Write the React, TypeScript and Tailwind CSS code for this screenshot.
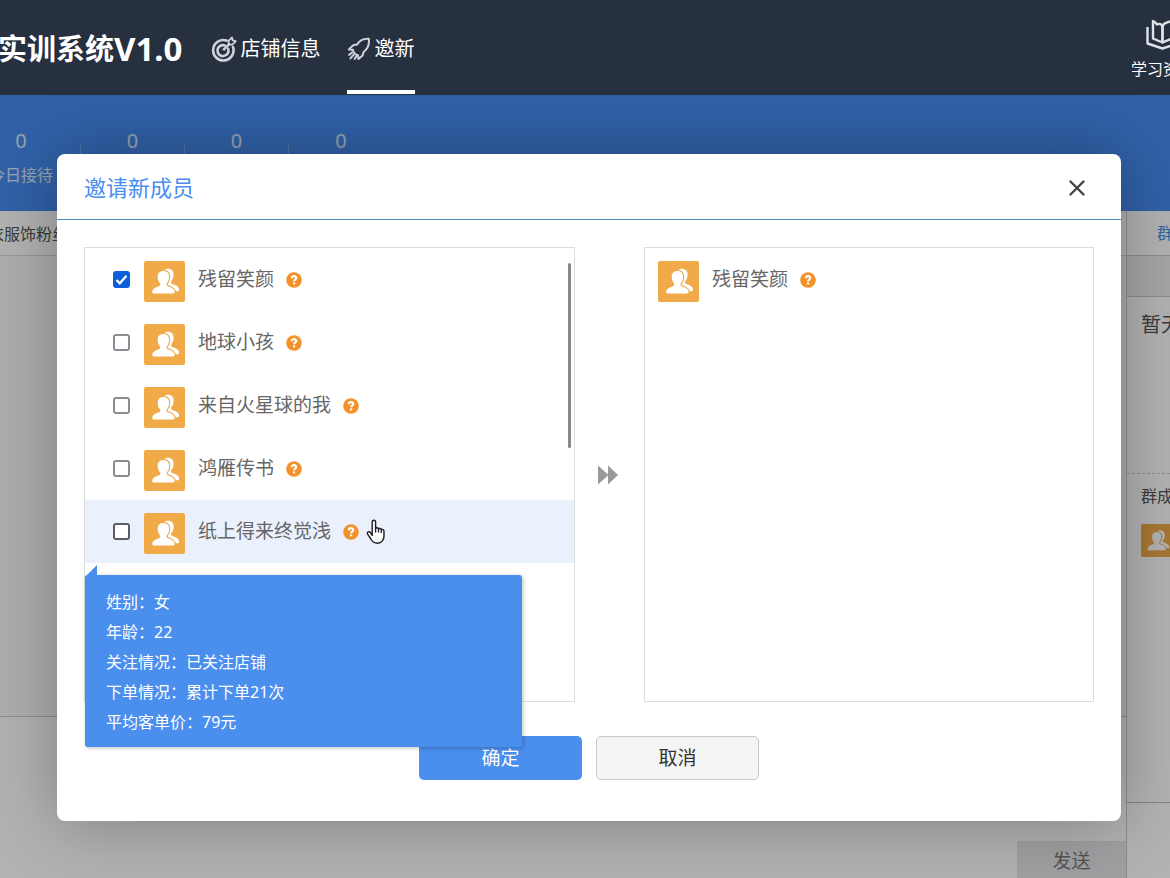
import { useState } from 'react';
import type { ReactNode } from 'react';

interface Member {
  id: number;
  name: string;
}

const members: Member[] = [
  { id: 1, name: '残留笑颜' },
  { id: 2, name: '地球小孩' },
  { id: 3, name: '来自火星球的我' },
  { id: 4, name: '鸿雁传书' },
  { id: 5, name: '纸上得来终觉浅' },
];

const details = [
  '姓别：女',
  '年龄：22',
  '关注情况：已关注店铺',
  '下单情况：累计下单21次',
  '平均客单价：79元',
];

const stats = [
  { label: '今日接待', value: 0 },
  { label: '', value: 0 },
  { label: '', value: 0 },
  { label: '', value: 0 },
];

function TargetIcon() {
  return (
    <svg viewBox="0 0 26 26" className="h-[26px] w-[26px]" fill="none" stroke="#cfd3d9" strokeWidth="2.6">
      <path d="M15.6 4.6A10.2 10.2 0 1 0 22 11" strokeLinecap="round" />
      <path d="M13.8 9.4A5.500 5.500 0 1 0 17.2 12.800" strokeLinecap="round" />
      <path d="M12.200 14.200 19 7.400" />
      <path d="M17.600 8.400V4.800L21 1.400 21.800 4.400 24.800 5.200 21.400 8.600H18Z" strokeWidth="1.800" strokeLinejoin="round" />
    </svg>
  );
}

function RocketIcon() {
  return (
    <svg viewBox="0 0 24 24" className="h-6 w-6" fill="none" stroke="#cfd3d9" strokeWidth="2" strokeLinecap="round" strokeLinejoin="round">
      <path d="M21.800 1.800C17 1.400 12.800 3.200 10 7.600L6.200 8.200 1.800 12.400 6 12.800C6.400 15.400 8.400 17.600 11 18.200L11.400 22 15.600 18.400 16.600 15C20.600 12 22.600 7.600 21.800 1.800Z" />
      <path d="M5 15.600 2 18M6.600 17.800 3.400 21.400M9.200 19.400 7.600 22" />
    </svg>
  );
}

function BookIcon() {
  return (
    <svg viewBox="0 0 36 32" className="h-8 w-9" fill="none" stroke="#dfe3e8" strokeWidth="2.400" strokeLinejoin="round">
      <path d="M2.500 8v16.500l15 5 15-5V8" />
      <path d="M8 2v17.500l9.500 4V9C17.500 5.500 15 4 12 5.500 11.500 4.500 10 3 8 2Z" />
      <path d="M27 2v17.500l-9.500 4V9C17.500 5.500 19 3.500 27 2Z" />
    </svg>
  );
}

const personPath =
  'M19.400 10c3.700 0 5.800 2.300 5.700 6 0 2.800-.9 4.700-2.200 6.200-.7 1-.4 2.300 1 3 3.600 1.600 6.500 2.300 6.700 5.600 0 1.200-.4 1.700-1.300 1.700H9.500c-.9 0-1.300-.5-1.200-1.700.2-3.300 3.100-4 6.700-5.600 1.400-.7 1.700-2 1-3-1.400-1.500-2.300-3.400-2.300-6.200 0-3.700 2-6 5.700-6Z';

function PeopleIcon({ className }: { className: string }) {
  return (
    <svg viewBox="0 0 41 41" className={className}>
      <rect width="41" height="41" rx="2" fill="#f0ab48" />
      <path fill="#fff" transform="translate(4.500 -2.300)" d={personPath} />
      <path fill="#fff" stroke="#f0ab48" strokeWidth="2.400" paintOrder="stroke" d={personPath} />
    </svg>
  );
}

function HelpIcon() {
  return (
    <svg viewBox="0 0 16 16" className="h-4 w-4 shrink-0">
      <circle cx="8" cy="8" r="7.800" fill="#f3922b" />
      <path d="M5.800 6.300C5.800 3.300 10.300 3.500 10.300 6c0 1.600-2.200 1.700-2.200 3.300" fill="none" stroke="#fff" strokeWidth="2.100" />
      <rect x="7" y="10.400" width="2.200" height="2" fill="#fff" />
    </svg>
  );
}

function HandCursor() {
  return (
    <svg viewBox="0 0 20 26" className="pointer-events-none absolute top-[19px] left-[281px] h-[26px] w-5">
      <path
        d="M6.200 16.500V3.200c0-2.600 3.400-2.600 3.400 0v6.200c.6-1.100 2.700-.8 2.900.5.800-.9 2.600-.5 2.800.7 1-.6 2.700-.1 2.700 1.700v4.600c0 3.500-2 7.300-6.500 7.300-4 0-5.300-1.700-6.700-4.200l-3-4.600c-1.400-2.200 1-3.500 2.400-2.100Z"
        fill="#fff"
        stroke="#1c1c24"
        strokeWidth="1.400"
        strokeLinejoin="round"
      />
      <path d="M9.600 9v4.500M12.500 10v3.500M15.300 11v3" stroke="#1c1c24" strokeWidth="1.300" />
    </svg>
  );
}

function NavItem({ icon, active, children }: { icon: ReactNode; active?: boolean; children: ReactNode }) {
  return (
    <a
      href="#"
      className={`flex h-full shrink-0 items-center gap-1 border-b-4 pt-2 text-xl text-white ${active ? 'border-white' : 'border-transparent'}`}
    >
      {icon}
      {children}
    </a>
  );
}

function MemberTip() {
  return (
    <div className="absolute top-full left-0 z-20 mt-3 w-[437px] rounded-[3px] bg-[#4a8eee] px-[21px] pt-3 pb-[10px] text-base leading-[30px] text-white shadow-[1px_1px_4px_rgba(0,0,0,0.25)]">
      <svg viewBox="0 0 12 12" className="absolute bottom-full left-0 -mb-0.5 h-3 w-3">
        <path d="M12 0v12H0Z" fill="#4a8eee" />
      </svg>
      {details.map((line) => (
        <p key={line}>{line}</p>
      ))}
    </div>
  );
}

export default function App() {
  const [selected, setSelected] = useState<number[]>([1]);
  const [hovered, setHovered] = useState(5);

  const toggle = (id: number) => {
    setSelected((prev) => (prev.includes(id) ? prev.filter((s) => s !== id) : [...prev, id]));
  };

  return (
    <div className="flex min-h-screen flex-col overflow-hidden font-['Noto_Sans','Noto_Sans_CJK_SC',sans-serif]">
      <header className="flex h-[95px] items-stretch justify-between overflow-hidden bg-[#27303f] pb-px text-white">
        <div className="flex items-stretch">
          <h1 className="-ml-0.5 flex shrink-0 items-center pt-1 text-[29px] font-bold">
            实训系统<span className="text-[33px]">V1.0</span>
          </h1>
          <nav className="ml-7 flex gap-[26px]">
            <NavItem icon={<TargetIcon />}>店铺信息</NavItem>
            <NavItem icon={<RocketIcon />} active>邀新</NavItem>
          </nav>
        </div>
        <div className="w-[39px]">
          <a href="#" className="flex w-16 flex-col items-center gap-1 pt-[19px] text-base">
            <BookIcon />
            <span className="leading-7">学习资源</span>
          </a>
        </div>
      </header>

      <main className="relative flex flex-1 flex-col overflow-hidden bg-white">
        {/* Shop statistics */}
        <section className="-ml-[38px] flex h-[116px] shrink-0 items-center bg-[#468cf0] text-center text-white/80">
          {stats.map((s, i) => (
            <div key={i} className={`flex h-full items-center ${i === 0 ? 'w-[119px]' : 'w-[104px]'}`}>
              <div className="flex h-full flex-1 flex-col items-center pt-8">
                <span className="text-xl leading-7">{s.value}</span>
                <span className="mt-2 text-base leading-6">{s.label}</span>
              </div>
              {i < stats.length - 1 && <span className="mt-3 h-7 w-px bg-white/25" />}
            </div>
          ))}
        </section>

        {/* Chat window behind the dialog */}
        <div className="flex flex-1">
          <section className="flex min-w-0 flex-1 flex-col border-r border-[#ccc]">
            <div className="flex h-[45px] items-center overflow-hidden border-b border-[#d6d6d6] pt-0.5 text-base text-[#555]">
              <span className="-ml-3 whitespace-nowrap">衣服饰粉丝群</span>
            </div>
            <div className="h-[461px] border-b border-[#ccc] bg-[#fafafa]" />
            <div className="flex flex-1 items-end justify-end">
              <button type="button" className="h-[37px] w-[109px] bg-[#e6e6ea] pt-1 text-[19px] text-[#777]">
                发送
              </button>
            </div>
          </section>
          <aside className="flex w-[43px] flex-col overflow-hidden whitespace-nowrap text-[#555]">
            <div className="flex h-[45px] items-center border-b border-[#ccc] pl-[30px] text-base text-[#4a8eee]">群公告</div>
            <div className="h-[41px] border-b border-[#ccc] bg-[#eee]" />
            <div className="h-[177px] border-b border-dashed border-[#ccc] pt-[14px] pl-[14px] text-xl">暂无</div>
            <div className="h-[329px] border-b border-[#bbb] pt-[10px] pl-[14px] text-base">
              <p>群成员</p>
              <PeopleIcon className="mt-4 h-[33px] w-[33px]" />
            </div>
          </aside>
        </div>

        {/* Dialog */}
        <div className="absolute inset-0 flex items-center bg-black/30 pt-0.5 pr-[49px] pl-[57px]">
          <div role="dialog" aria-labelledby="dialog-title" className="flex-1 rounded-lg bg-white pb-[41px] shadow-[1px_1px_68px_rgba(0,0,0,0.3)]">
            <div className="flex h-[66px] items-center justify-between border-b border-[#4f8bbd] pt-0.5 pr-9 pl-[27px]">
              <h2 id="dialog-title" className="text-[22px] text-[#4a8eee]">邀请新成员</h2>
              <button type="button" aria-label="关闭" className="p-0">
                <svg viewBox="0 0 16 16" className="h-4 w-4" stroke="#444" strokeWidth="2.400" strokeLinecap="round">
                  <path d="m1.500 1.500 13 13M14.500 1.500l-13 13" />
                </svg>
              </button>
            </div>

            <div className="grid grid-cols-[12fr_69px_11fr] px-[27px] pt-[27px]">
              <div className="relative h-[455px] border border-[#ddd]">
                <ul>
                  {members.map((m) => (
                    <li
                      key={m.id}
                      onMouseEnter={() => setHovered(m.id)}
                      className={`relative h-[63px] ${hovered === m.id ? 'bg-[#eaf1fd]' : ''}`}
                    >
                      <label className="flex h-full cursor-pointer items-center pl-7 text-[19px] text-[#666]">
                        <span className="grid h-[17px] w-[17px] shrink-0 place-items-center">
                          <input
                            type="checkbox"
                            checked={selected.includes(m.id)}
                            onChange={() => toggle(m.id)}
                            className={`col-start-1 row-start-1 h-[17px] w-[17px] appearance-none rounded-[3px] border-2 bg-white checked:border-[#0b5fd9] checked:bg-[#0b5fd9] ${hovered === m.id ? 'border-[#5a5d66]' : 'border-[#8c8c94]'}`}
                          />
                          {selected.includes(m.id) && (
                            <svg viewBox="0 0 17 17" className="pointer-events-none col-start-1 row-start-1 h-[17px] w-[17px]">
                              <path d="m3.500 9 3.300 3.300 6.700-7.600" fill="none" stroke="#fff" strokeWidth="2.200" />
                            </svg>
                          )}
                        </span>
                        <PeopleIcon className="mt-1 ml-[14px] h-[41px] w-[41px] shrink-0" />
                        <span className="ml-[13px]">{m.name}</span>
                        <span className="ml-3"><HelpIcon /></span>
                      </label>
                      {hovered === m.id && <HandCursor />}
                      {hovered === m.id && <MemberTip />}
                    </li>
                  ))}
                </ul>
                <div className="absolute top-[15px] right-[3px] h-[185px] w-[3px] rounded-full bg-[#888]" />
              </div>

              <div className="flex items-center justify-center pr-0.5">
                <svg viewBox="0 0 20 20" className="h-5 w-5" fill="#999">
                  <path d="M0 0.500 10 9.500V0.500L20 10 10 19.500V10.500L0 19.500Z" />
                </svg>
              </div>

              <ul className="h-[455px] border border-[#ddd]">
                {members.filter((m) => selected.includes(m.id)).map((m) => (
                  <li key={m.id} className="flex h-[63px] items-center pl-[13px] text-[19px] text-[#666]">
                    <PeopleIcon className="mt-1 h-[41px] w-[41px] shrink-0" />
                    <span className="ml-[13px]">{m.name}</span>
                    <span className="ml-3"><HelpIcon /></span>
                  </li>
                ))}
              </ul>
            </div>

            <div className="mt-[34px] flex justify-center gap-[14px] text-[19px]">
              <button type="button" className="h-11 w-[163px] rounded-[5px] bg-[#4a8eee] text-white">确定</button>
              <button type="button" className="h-11 w-[163px] rounded-[5px] border border-[#c9c9c9] bg-[#f4f4f4] text-[#333]">取消</button>
            </div>
          </div>
        </div>
      </main>
    </div>
  );
}
